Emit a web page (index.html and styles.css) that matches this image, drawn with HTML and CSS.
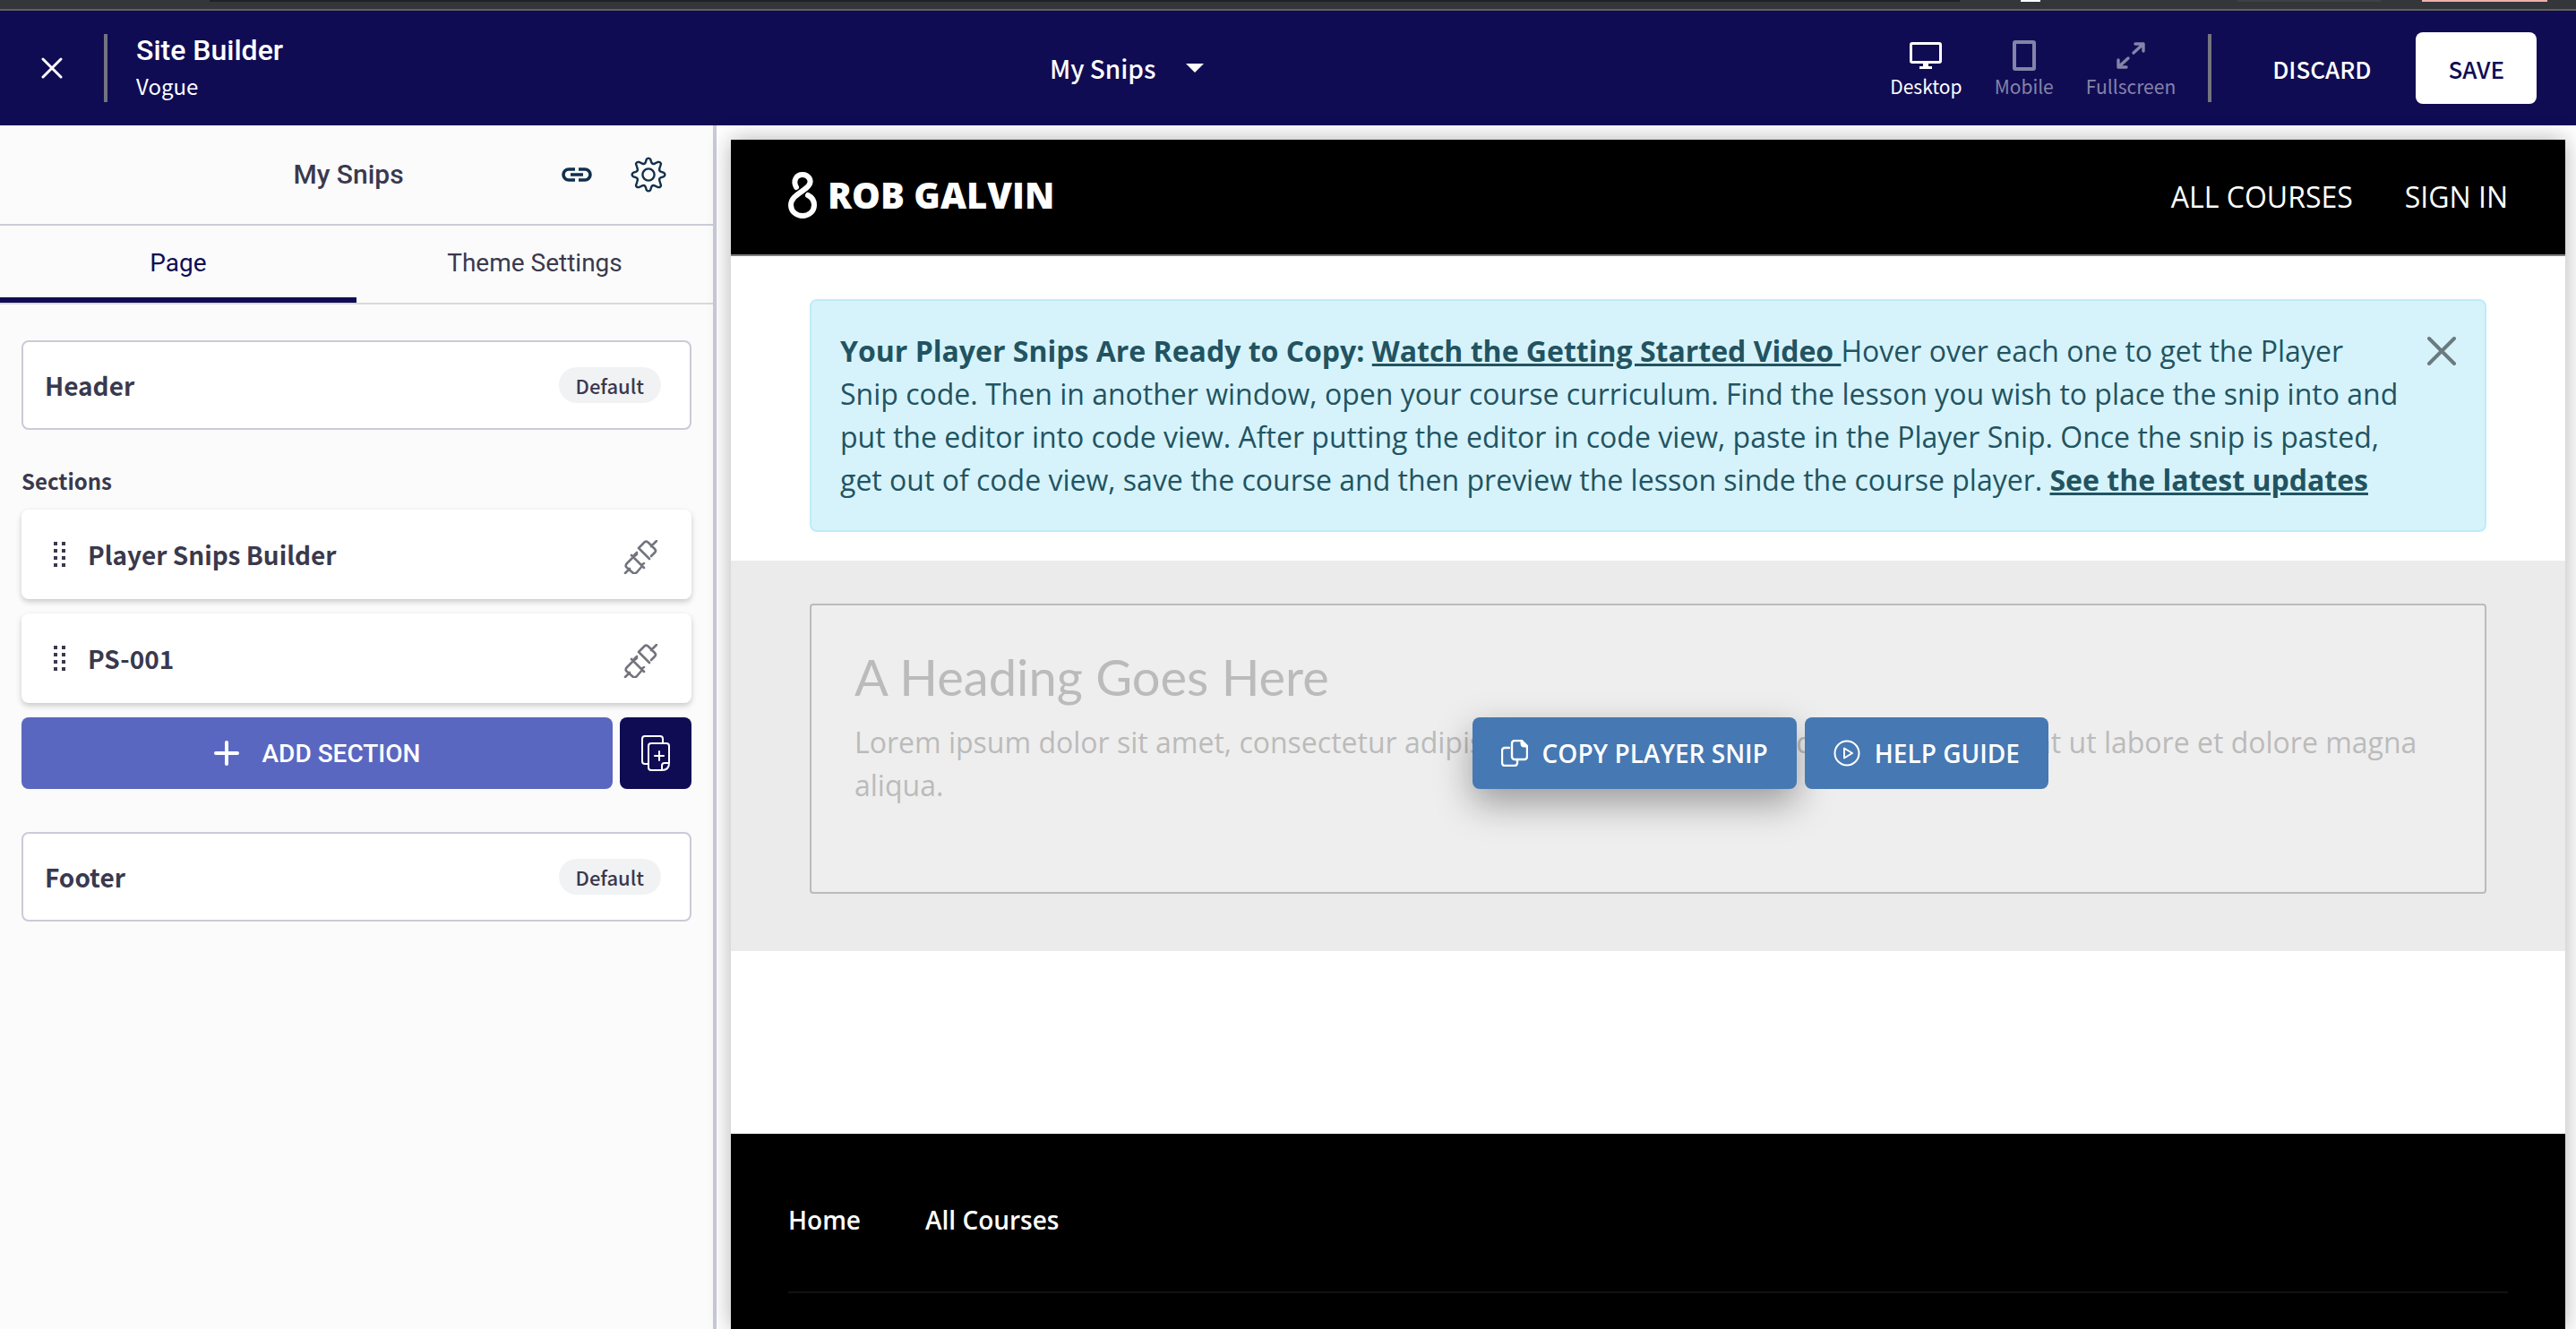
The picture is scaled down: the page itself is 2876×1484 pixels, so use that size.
FILE: index.html
```html
<!DOCTYPE html>
<html lang="en">
<head>
<meta charset="utf-8">
<title>Site Builder</title>
<link rel="stylesheet" href="styles.css">
</head>
<body>
<div class="chrome">
  <span class="chrome-field"></span>
  <span class="chrome-ext"></span>
  <span class="chrome-pill"></span>
  <span class="chrome-update"></span>
</div>

<header class="topbar">
  <div class="brand">
    <button class="icon-btn" type="button" aria-label="Close">
      <svg width="24" height="24" viewBox="0 0 24 24" fill="none" stroke="currentColor" stroke-width="3" stroke-linecap="round"><path d="M2 2l20 20M22 2L2 22"/></svg>
    </button>
    <span class="rule"></span>
    <div class="brand-text">
      <h1 class="brand-title">Site Builder</h1>
      <p class="brand-theme">Vogue</p>
    </div>
  </div>
  <button class="page-picker" type="button">
    <span>My Snips</span>
    <svg width="20" height="10" viewBox="0 0 20 10" fill="currentColor"><path d="M0 0h20L10 10z"/></svg>
  </button>
  <div class="actions">
    <button class="device is-active" type="button">
      <svg width="36" height="36" viewBox="0 0 36 36" fill="currentColor"><path fill-rule="evenodd" d="M3 3h30a3 3 0 0 1 3 3v18a3 3 0 0 1-3 3H21v3h4v3H11v-3h4v-3H3a3 3 0 0 1-3-3V6a3 3 0 0 1 3-3zM3 6v18h30V6z"/></svg>
      <span>Desktop</span>
    </button>
    <button class="device" type="button">
      <svg width="36" height="36" viewBox="0 0 36 36" fill="currentColor"><path fill-rule="evenodd" d="M8 1h20a3 3 0 0 1 3 3v28a3 3 0 0 1-3 3H8a3 3 0 0 1-3-3V4a3 3 0 0 1 3-3zM9 5v26h18V5z"/></svg>
      <span>Mobile</span>
    </button>
    <button class="device" type="button">
      <svg width="36" height="36" viewBox="0 0 36 36" fill="none" stroke="currentColor" stroke-width="3.400" stroke-linecap="round" stroke-linejoin="round"><path d="M21 15L32 5M23 5h9v8M15 21L4 31M4 23v8h9"/></svg>
      <span>Fullscreen</span>
    </button>
    <span class="rule"></span>
    <button class="discard" type="button">DISCARD</button>
    <button class="save" type="button">SAVE</button>
  </div>
</header>

<div class="workspace">
  <aside class="sidebar">
    <div class="side-head">
      <h2 class="side-title">My Snips</h2>
      <div class="side-tools">
        <button class="icon-btn" type="button" aria-label="Copy link">
          <svg width="40" height="40" viewBox="0 0 40 40" fill="none" stroke="currentColor" stroke-width="3.600"><path d="M18 14h-7a6 6 0 0 0 0 12h7M22 14h7a6 6 0 0 1 0 12h-7M13 20h14"/></svg>
        </button>
        <button class="icon-btn" type="button" aria-label="Page settings">
          <svg width="40" height="40" viewBox="0 0 40 40" fill="none" stroke="currentColor" stroke-width="2.4" stroke-linejoin="round"><circle cx="20" cy="20" r="6.6"/><path d="M17.8 2.800Q20 .4 22.200 2.800L23.300 6.400Q24.500 8.800 27 7.600L30.300 6Q33.200 5.300 34 7.900L32.400 13Q31.400 15.600 33.600 16.700L37.200 17.800Q39.600 20 37.200 22.200L33.600 23.300Q31.400 24.500 32.400 27L34 32.100Q33.200 34.700 30.300 34L27 32.400Q24.500 31.200 23.300 33.600L22.200 37.200Q20 39.600 17.800 37.200L16.700 33.600Q15.500 31.200 13 32.400L9.700 34Q6.800 34.700 6 32.100L7.600 27Q8.600 24.500 6.400 23.300L2.800 22.200Q.4 20 2.800 17.800L6.400 16.700Q8.600 15.600 7.600 13L6 7.900Q6.800 5.300 9.700 6L13 7.600Q15.500 8.800 16.700 6.400z"/></svg>
        </button>
      </div>
    </div>
    <nav class="tabs">
      <button class="tab is-active" type="button">Page</button>
      <button class="tab" type="button">Theme Settings</button>
    </nav>
    <div class="side-body">
      <section class="panel">
        <h3 class="panel-name">Header</h3>
        <span class="badge">Default</span>
      </section>

      <h3 class="group-label">Sections</h3>
      <div class="section-list">
        <div class="section-card">
          <svg class="grip" width="14" height="28" viewBox="0 0 14 28" fill="currentColor"><path d="M0 0h4v4H0zM9 0h4v4H9zM0 8h4v4H0zM9 8h4v4H9zM0 16h4v4H0zM9 16h4v4H9zM0 24h4v4H0zM9 24h4v4H9z"/></svg>
          <span class="section-name">Player Snips Builder</span>
          <svg class="plug" width="38" height="38" viewBox="0 0 38 38" fill="none" stroke="currentColor" stroke-width="2.600" stroke-linecap="round" stroke-linejoin="round"><path d="M2 37l5-5M9 17l14 14M11 19l-7 7q-2 2-1 4l8 7q2 1 4-1l6-7M11 19l4-3M20 28l3-2"/><path d="M17 9l12 12M17 9l7-7q2-1 4 1l7 7q2 2 0 4l-4 4M31 7l6-6M12 17l3-3"/></svg>
        </div>
        <div class="section-card">
          <svg class="grip" width="14" height="28" viewBox="0 0 14 28" fill="currentColor"><path d="M0 0h4v4H0zM9 0h4v4H9zM0 8h4v4H0zM9 8h4v4H9zM0 16h4v4H0zM9 16h4v4H9zM0 24h4v4H0zM9 24h4v4H9z"/></svg>
          <span class="section-name">PS-001</span>
          <svg class="plug" width="38" height="38" viewBox="0 0 38 38" fill="none" stroke="currentColor" stroke-width="2.600" stroke-linecap="round" stroke-linejoin="round"><path d="M2 37l5-5M9 17l14 14M11 19l-7 7q-2 2-1 4l8 7q2 1 4-1l6-7M11 19l4-3M20 28l3-2"/><path d="M17 9l12 12M17 9l7-7q2-1 4 1l7 7q2 2 0 4l-4 4M31 7l6-6M12 17l3-3"/></svg>
        </div>
        <div class="add-row">
          <button class="add-btn" type="button">
            <svg width="28" height="28" viewBox="0 0 28 28" stroke="currentColor" stroke-width="4" stroke-linecap="round"><path d="M14 2v24M2 14h24"/></svg>
            <span>ADD SECTION</span>
          </button>
          <button class="paste-btn" type="button" aria-label="Paste section">
            <svg width="32" height="40" viewBox="0 0 32 40" fill="none" stroke="currentColor" stroke-width="2" stroke-linejoin="round" stroke-linecap="round"><path d="M8 32H4a3 3 0 0 1-3-3V4a3 3 0 0 1 3-3h17a3 3 0 0 1 3 3v5"/><path d="M11 9h17a3 3 0 0 1 3 3v19q0 8-8 8H11a3 3 0 0 1-3-3V12a3 3 0 0 1 3-3zM31 31h-5a3 3 0 0 0-3 3v5M20 18v10M15 23h10"/></svg>
          </button>
        </div>
      </div>

      <section class="panel">
        <h3 class="panel-name">Footer</h3>
        <span class="badge">Default</span>
      </section>
    </div>
  </aside>

  <main class="stage">
    <div class="site">
      <header class="site-head">
        <a class="logo" href="#">
          <svg width="32" height="52" viewBox="0 0 32 52" fill="none" stroke="currentColor" stroke-width="6" stroke-linecap="round"><path d="M9 17C5 10 9 3 16 3s11 7 7 12C18 22 3 26 3 37c0 7 6 12 13 12s13-5 13-12c0-5-3-9-7-11"/></svg>
          <span>ROB GALVIN</span>
        </a>
        <nav class="site-nav">
          <a href="#">ALL COURSES</a>
          <a href="#">SIGN IN</a>
        </nav>
      </header>

      <div class="notice-wrap">
        <div class="notice">
          <p><strong>Your Player Snips Are Ready to Copy: <a href="#">Watch the Getting Started Video&nbsp;</a></strong>Hover over each one to get the Player Snip code. Then in another window, open your course curriculum. Find the lesson you wish to place the snip into and put the editor into code view. After putting the editor in code view, paste in the Player Snip. Once the snip is pasted, get out of code view, save the course and then preview the lesson sinde the course player. <strong><a href="#">See the latest updates</a></strong></p>
          <button class="notice-close" type="button" aria-label="Dismiss">
            <svg width="32" height="32" viewBox="0 0 32 32" fill="none" stroke="currentColor" stroke-width="4" stroke-linecap="round"><path d="M2 2l28 28M30 2L2 30"/></svg>
          </button>
        </div>
      </div>

      <section class="snip">
        <div class="snip-box">
          <h2>A Heading Goes Here</h2>
          <p>Lorem ipsum dolor sit amet, consectetur adipiscing elit, sed do eiusmod tempor incididunt ut labore et dolore magna aliqua.</p>
        </div>
        <div class="snip-actions">
          <button class="snip-btn is-hover" type="button">
            <svg width="30" height="30" viewBox="0 0 30 30" fill="none" stroke="currentColor" stroke-width="2.400" stroke-linejoin="round" stroke-linecap="round"><path d="M9 9H4a3 3 0 0 0-3 3v14a3 3 0 0 0 3 3h11a3 3 0 0 0 3-3v-3"/><path d="M15 1h8l6 6v12a3 3 0 0 1-3 3H15a3 3 0 0 1-3-3V4a3 3 0 0 1 3-3z"/><path d="M22 1v4a3 3 0 0 0 3 3h4l-7-7z" fill="currentColor" stroke-width="1"/></svg>
            <span>COPY PLAYER SNIP</span>
          </button>
          <button class="snip-btn" type="button">
            <svg width="30" height="30" viewBox="0 0 30 30" fill="none" stroke="currentColor" stroke-width="2" stroke-linejoin="round"><circle cx="15" cy="15" r="13.500"/><path d="M12 9.500v11l9-5.500z"/></svg>
            <span>HELP GUIDE</span>
          </button>
        </div>
      </section>

      <footer class="site-foot">
        <nav class="foot-nav">
          <a href="#">Home</a>
          <a href="#">All Courses</a>
        </nav>
      </footer>
    </div>
  </main>
</div>
</body>
</html>
```
FILE: styles.css
```css
:root {
  --navy: #100c54;
  --ink: #3a394d;
  --line: #cacbd8;
  --source: "Noto Sans CJK JP", "Noto Sans", sans-serif;
  --barlow: Roboto, sans-serif;
  --open: "Open Sans", "Noto Sans", sans-serif;
}

* { box-sizing: border-box; }

body {
  margin: 0;
  height: 100vh;
  overflow: hidden;
  display: flex;
  flex-direction: column;
  font-family: var(--source);
  color: var(--ink);
  background: #fff;
}

h1, h2, h3, p { margin: 0; }

button {
  margin: 0;
  padding: 0;
  border: 0;
  background: none;
  font: inherit;
  color: inherit;
}

svg { display: block; flex: none; }

/* Browser chrome edge */
.chrome {
  flex: none;
  display: flex;
  align-items: flex-start;
  height: 12px;
  padding: 0 32px 0 234px;
  background: #35363a;
  border-bottom: 2px solid #5f6064;
}
.chrome span { height: 2px; }
.chrome-field { flex: 1; margin-right: 68px; background: #202124; }
.chrome-ext { width: 22px; margin-right: 220px; background: #fff; }
.chrome-pill { width: 160px; margin-right: 46px; background: #404146; }
.chrome-update { width: 140px; background: #f0aeaa; }

/* Top bar */
.topbar {
  flex: none;
  display: grid;
  grid-template-columns: 1172px 1fr auto;
  align-items: center;
  height: 128px;
  padding-right: 44px;
  background: var(--navy);
  color: #fff;
}
.brand { display: flex; align-items: center; padding-left: 46px; }
.rule { width: 4px; height: 76px; background: #74747f; }
.brand .rule { margin: 0 32px 0 46px; }
.brand-title {
  font-family: var(--barlow);
  font-weight: 500;
  font-size: 32px;
  line-height: 40px;
}
.brand-theme { font-size: 24px; line-height: 40px; }
.page-picker {
  justify-self: start;
  display: flex;
  align-items: center;
  gap: 34px;
  font-weight: 500;
  font-size: 28px;
  line-height: 40px;
}
.actions { display: flex; align-items: center; }
.device {
  display: flex;
  flex-direction: column;
  align-items: center;
  margin-right: 36px;
  padding-top: 4px;
  font-size: 21px;
  line-height: 32px;
  color: #8583a8;
}
.device.is-active { color: #fff; }
.discard, .save {
  height: 80px;
  padding: 0 36px;
  border-radius: 8px;
  font-weight: 500;
  font-size: 26px;
}
.discard { margin: 0 14px 0 32px; }
.save { background: #fff; color: var(--navy); }

/* Workspace */
.workspace { flex: 1; min-height: 0; display: flex; }

.sidebar {
  flex: none;
  width: 800px;
  background: #fbfbfb;
  border-right: 4px solid var(--line);
}
.side-head {
  display: grid;
  grid-template-columns: 1fr auto 1fr;
  align-items: center;
  height: 112px;
  padding: 0 52px 0 34px;
  border-bottom: 2px solid var(--line);
}
.side-title {
  grid-column: 2;
  font-family: var(--barlow);
  font-weight: 500;
  font-size: 30px;
  line-height: 40px;
}
.side-tools {
  display: flex;
  justify-content: flex-end;
  gap: 40px;
  color: #12304d;
}
.tabs {
  display: flex;
  height: 88px;
  border-bottom: 2px solid #d8d8db;
}
.tab {
  flex: 1;
  border-bottom: 6px solid transparent;
  padding-top: 2px;
  font-family: var(--barlow);
  font-size: 28px;
}
.tab.is-active { color: var(--navy); border-bottom-color: var(--navy); }

.side-body { padding: 40px 24px 0; }
.panel {
  display: flex;
  align-items: center;
  justify-content: space-between;
  height: 100px;
  padding: 0 32px 0 24px;
  border: 2px solid var(--line);
  border-radius: 8px;
  background: #fff;
}
.panel-name, .section-name { font-weight: 700; font-size: 28px; line-height: 40px; }
.badge {
  padding: 0 19px;
  border-radius: 20px;
  background: #f1f2f4;
  font-weight: 500;
  font-size: 22px;
  line-height: 40px;
}
.group-label { margin: 37px 0 12px; font-weight: 700; font-size: 24px; line-height: 40px; }
.section-list { display: flex; flex-direction: column; gap: 16px; margin-bottom: 48px; }
.section-card {
  display: flex;
  align-items: center;
  height: 100px;
  padding: 0 38px 0 36px;
  border-radius: 8px;
  background: #fff;
  box-shadow: 0 3px 6px rgba(0, 0, 0, .2);
}
.section-name { margin-left: 24px; }
.plug { margin: 6px 0 0 auto; color: #74747f; }
.add-row { display: flex; gap: 8px; height: 80px; }
.add-btn, .paste-btn {
  display: flex;
  align-items: center;
  justify-content: center;
  border-radius: 8px;
  color: #fff;
}
.add-btn {
  flex: 1;
  gap: 26px;
  background: #5a67c0;
  font-family: var(--barlow);
  font-weight: 500;
  font-size: 28px;
}
.paste-btn { width: 80px; background: var(--navy); }

/* Preview */
.stage { flex: 1; min-width: 0; padding: 16px 12px 0 16px; }
.site {
  display: flex;
  flex-direction: column;
  height: 100%;
  background: #fff;
  box-shadow: 0 0 24px rgba(0, 0, 0, .3);
  font-family: var(--open);
  font-size: 32px;
  line-height: 48px;
}
.site-head {
  flex: none;
  display: flex;
  align-items: center;
  justify-content: space-between;
  height: 130px;
  padding: 0 64px;
  background: #000;
  border-bottom: 2px solid #808080;
  color: #fff;
}
.site-head a, .site-foot a { color: inherit; text-decoration: none; }
.logo {
  display: flex;
  align-items: center;
  gap: 12px;
  margin-bottom: 4px;
  font-weight: 800;
  font-size: 40px;
}
.site-nav { display: flex; gap: 58px; }

.notice-wrap { flex: none; padding: 48px 88px 32px; }
.notice {
  position: relative;
  padding: 32px 96px 32px 32px;
  border: 2px solid #beecf7;
  border-radius: 8px;
  background: #d6f3fb;
  color: #225361;
}
.notice strong { font-weight: 700; }
.notice a { color: inherit; }
.notice-close { position: absolute; top: 40px; right: 32px; color: #6b7a7e; }

.snip {
  flex: none;
  position: relative;
  padding: 48px 88px 64px;
  background: #ebebeb;
}
.snip-box {
  height: 324px;
  padding: 48px;
  border: 2px solid #bbb;
  border-radius: 4px;
  background: #eee;
  color: #bbb;
}
.snip-box h2 {
  margin-bottom: 17px;
  font-family: Lato, sans-serif;
  font-weight: 400;
  font-size: 56px;
  line-height: 64px;
}
/* Floating controls drawn over the snippet while it is hovered */
.snip-actions {
  position: absolute;
  top: 175px;
  right: 577px;
  display: flex;
  gap: 9px;
}
.snip-btn {
  display: flex;
  align-items: center;
  gap: 16px;
  height: 80px;
  padding: 0 32px;
  border-radius: 8px;
  background: #4678b3;
  color: #fff;
  font-weight: 600;
  font-size: 28px;
}
.snip-btn.is-hover { box-shadow: 0 16px 40px rgba(0, 0, 0, .35); }

.site-foot {
  flex: 1;
  margin-top: 204px;
  padding: 72px 64px 0;
  background: #000;
  color: #fff;
}
.foot-nav {
  display: flex;
  gap: 72px;
  padding-bottom: 56px;
  border-bottom: 2px solid #111;
  font-weight: 600;
  font-size: 28px;
}
```
